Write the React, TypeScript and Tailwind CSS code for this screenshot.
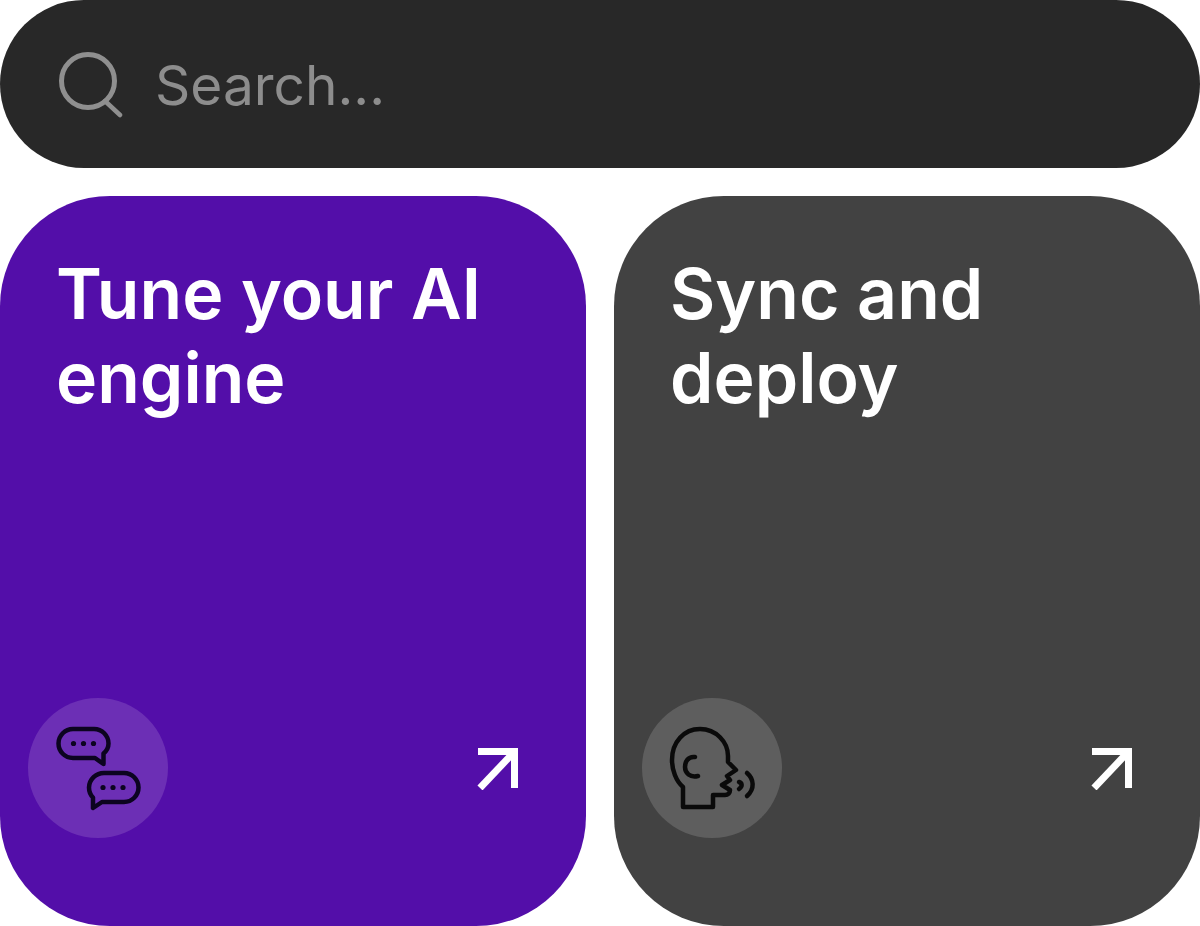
const inter = "font-['Inter',sans-serif]";

function SearchIcon() {
  return (
    <svg width="68" height="68" viewBox="0 0 68 68" fill="none" stroke="#8f8f8f" strokeLinecap="round" className="shrink-0">
      <circle cx="31" cy="31" r="26.5" strokeWidth="5" />
      <path d="M48 51 L63 65" strokeWidth="4.5" />
    </svg>
  );
}

function ArrowIcon() {
  return (
    <svg width="44" height="44" viewBox="0 0 44 44" fill="none" stroke="#ffffff" strokeWidth="7" className="shrink-0">
      <path d="M2 5.5 H38.5 V42" />
      <path d="M38.5 5.5 L4 42" />
    </svg>
  );
}

function ChatIcon() {
  return (
    <svg width="140" height="140" viewBox="0 0 140 140" fill="none" stroke="#0c0420" strokeWidth="4.5" strokeLinejoin="round">
      <path d="M45 31 H66 A14.5 14.5 0 0 1 80.5 45.5 C80.5 50 78.5 53 75.5 55.5 V66 L67 60 H45 A14.5 14.5 0 0 1 45 31 Z" />
      <path d="M76 75 H96 A14.5 14.5 0 0 1 96 104 H74 L65 110 V99.5 C62.5 97 61 94 61 89.5 A15 15 0 0 1 76 75 Z" />
      <g fill="#0c0420" stroke="none">
        <circle cx="45.5" cy="45.5" r="2.6" />
        <circle cx="55.5" cy="45.5" r="2.6" />
        <circle cx="65.5" cy="45.5" r="2.6" />
        <circle cx="75" cy="89.5" r="2.6" />
        <circle cx="85" cy="89.5" r="2.6" />
        <circle cx="95" cy="89.5" r="2.6" />
      </g>
    </svg>
  );
}

function SpeakIcon() {
  return (
    <svg width="140" height="140" viewBox="0 0 140 140" fill="none" stroke="#0a0a0a" strokeWidth="4.5" strokeLinecap="round" strokeLinejoin="round">
      <path d="M41 109 V89 C34 83 30 72 30 62 C30 44 42 31 58 31 C74 31 86 44 86 58 V64 L94 72 L85 78 L88 82 L80 87 L88 92 C88 95 86 97 83 97 H71 V109 Z" />
      <path d="M53 59 C46 58 43 64 43 69 C43 75 48 80 56 78" />
      <path d="M97 84 C100 85 101 88 97 91" />
      <path d="M105 75 C112 81 113 91 105 98" />
    </svg>
  );
}

function Card({ title, bg, chip, icon }: { title: string[]; bg: string; chip: string; icon: React.ReactNode }) {
  return (
    <div className={`${bg} rounded-[110px] flex flex-col justify-between pt-[56px] pb-[88px] pl-[28px] pr-[66px]`}>
      <h2 className="pl-[28px] text-[69.7px] leading-[84px] font-semibold text-white whitespace-nowrap">
        {title.map((line) => (
          <div key={line}>{line}</div>
        ))}
      </h2>
      <div className="flex items-center justify-between">
        <div className={`${chip} w-[140px] h-[140px] rounded-full`}>{icon}</div>
        <ArrowIcon />
      </div>
    </div>
  );
}

export default function App() {
  return (
    <div className={`${inter} w-[1200px] h-[926px] bg-white flex flex-col gap-[28px] overflow-hidden`}>
      <div className="h-[168px] shrink-0 rounded-[84px] bg-[#282828] flex items-center gap-[30px] pl-[57px]">
        <SearchIcon />
        <span className="mt-[3px] text-[55px] text-[#8d8d8d]">Search...</span>
      </div>
      <div className="flex-1 grid grid-cols-2 gap-[28px]">
        <Card title={["Tune your AI", "engine"]} bg="bg-[#530ea9]" chip="bg-[#6c2fb5]" icon={<ChatIcon />} />
        <Card title={["Sync and", "deploy"]} bg="bg-[#424242]" chip="bg-[#5e5e5e]" icon={<SpeakIcon />} />
      </div>
    </div>
  );
}
